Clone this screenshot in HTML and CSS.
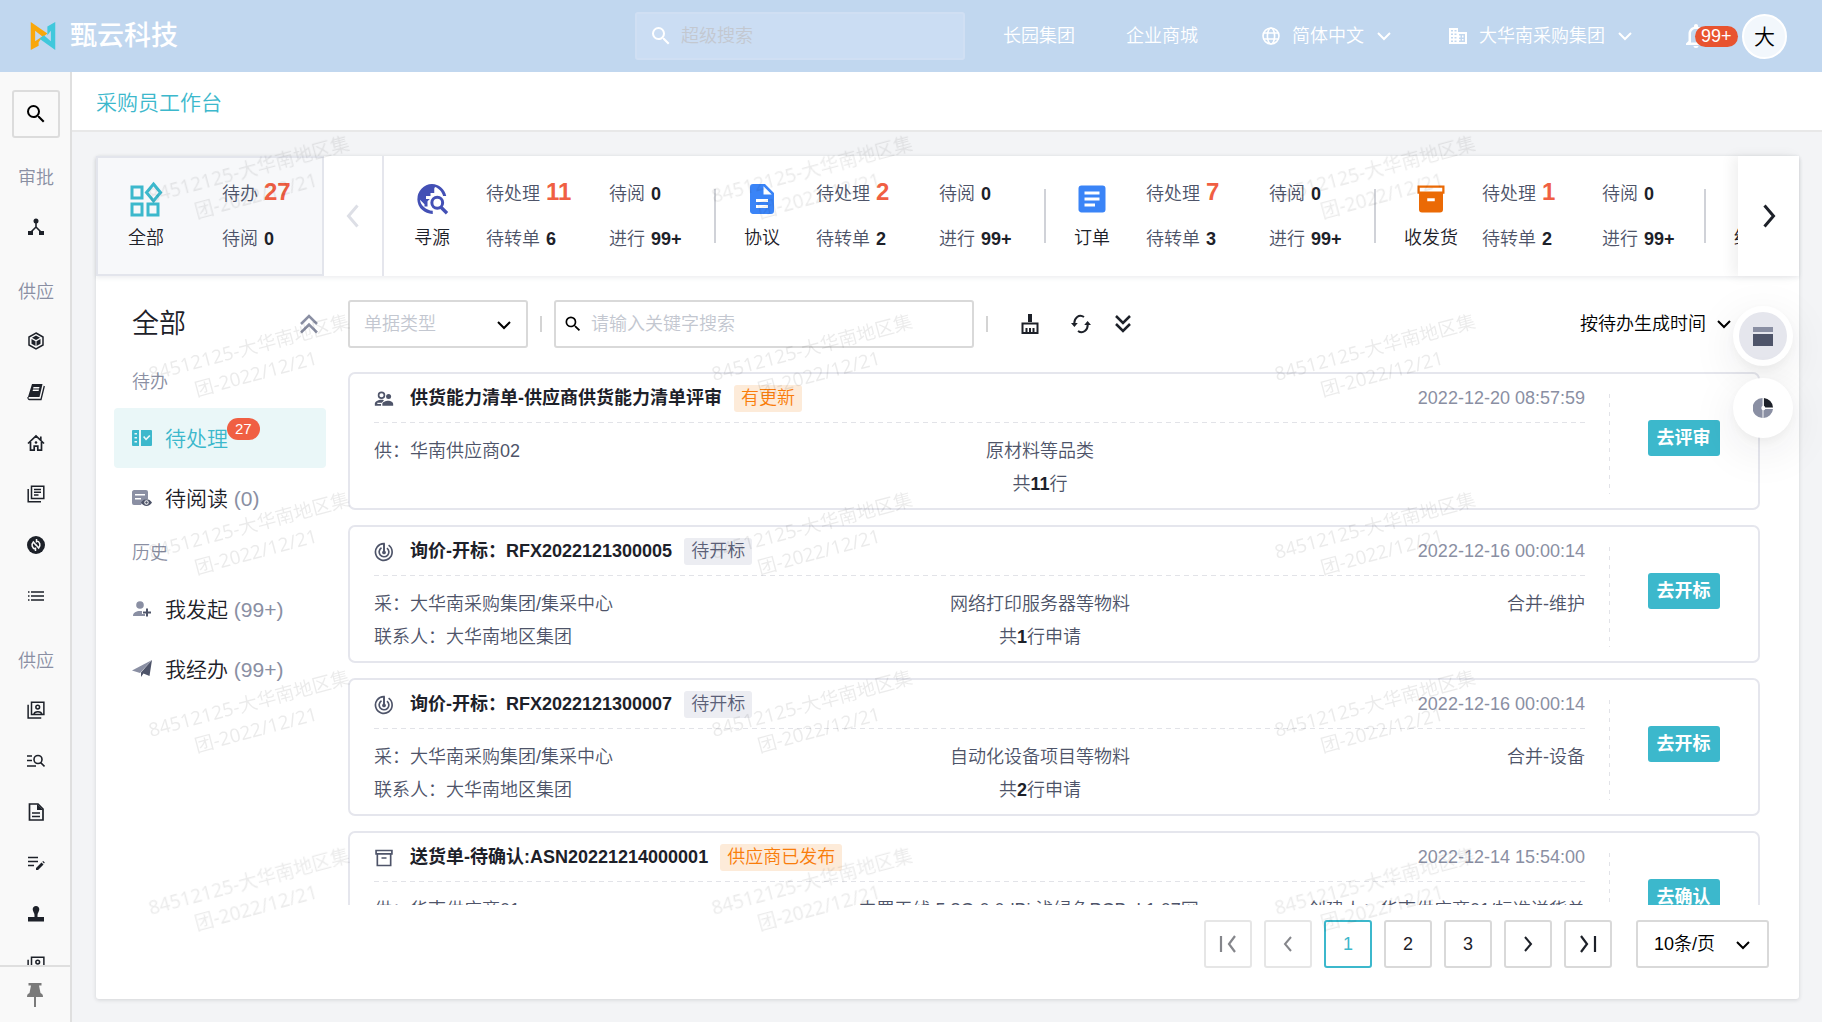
FILE: index.html
```html
<!DOCTYPE html>
<html lang="zh-CN">
<head>
<meta charset="utf-8">
<meta name="viewport" content="width=device-width, initial-scale=1">
<title>采购员工作台</title>
<link rel="stylesheet" href="styles.css">
</head>
<body>
<svg class="sprite" aria-hidden="true">
  <symbol id="i-search" viewBox="0 0 24 24"><path fill="currentColor" d="M15.5 14h-.79l-.28-.27A6.47 6.47 0 0 0 16 9.500 6.500 6.500 0 1 0 9.500 16c1.610 0 3.090-.59 4.230-1.570l.27.28v.79l5 4.990L20.490 19zm-6 0C7.010 14 5 11.990 5 9.500S7.010 5 9.500 5 14 7.010 14 9.500 11.990 14 9.500 14z"/></symbol>
  <symbol id="i-down" viewBox="0 0 16 16"><path fill="none" stroke="currentColor" stroke-width="2" d="M2 5l6 6 6-6"/></symbol>
  <symbol id="i-left" viewBox="0 0 16 16"><path fill="none" stroke="currentColor" stroke-width="2" d="M11 1L5 8l6 7"/></symbol>
  <symbol id="i-right" viewBox="0 0 16 16"><path fill="none" stroke="currentColor" stroke-width="2" d="M5 1l6 7-6 7"/></symbol>
  <symbol id="i-people" viewBox="0 0 24 24"><circle cx="9" cy="7.500" r="3.500" fill="none" stroke="currentColor" stroke-width="2"/><circle cx="17.500" cy="9" r="3" fill="currentColor"/><path fill="currentColor" d="M1 20v-2c0-3 4-5 8-5 1 0 2 .1 3 .4L9.500 16.500H4V18h4.500v2zM10 20v-2c0-2.500 4-4 7-4s6 1.500 6 4v2z"/></symbol>
  <symbol id="i-target" viewBox="0 0 24 24"><path fill="none" stroke="currentColor" stroke-width="2" d="M17.500 3.800A10 10 0 1 1 12 2v10M15.500 7.300A5.800 5.800 0 1 1 9 7"/><path fill="none" stroke="currentColor" stroke-width="2" d="M12 2v10"/><circle cx="12" cy="12.500" r="2.200" fill="currentColor"/></symbol>
  <symbol id="i-archive" viewBox="0 0 24 24"><path fill="none" stroke="currentColor" stroke-width="2" d="M2.500 3h19v4h-19zM4 7v14h16V7M9 12h6"/></symbol>
  <symbol id="i-contacts" viewBox="0 0 24 24"><path fill="none" stroke="currentColor" stroke-width="2" d="M6 1.500h16.500V18H6zM1.500 5v17.500H19M9 18c1-5 10-5 11 0"/><circle cx="14.300" cy="8" r="2.500" fill="none" stroke="currentColor" stroke-width="2"/></symbol>
</svg>

<div class="app">
  <header class="topbar">
    <a class="brand" href="#">
      <svg class="brand-mark" viewBox="0 0 30 32"><path fill="#f9a70a" d="M1 0l19 13-5 4-9-7v12l9-6-5 7v4L1 32z"/><path fill="#40c8dc" d="M29 0v32L11 19l5-4 8 7V10l-4 5V5z"/></svg>
      <span class="brand-name">甄云科技</span>
    </a>
    <label class="global-search">
      <svg class="ic-24"><use href="#i-search"/></svg>
      <input type="text" aria-label="超级搜索" placeholder="超级搜索">
    </label>
    <a class="top-link" href="#">长园集团</a>
    <a class="top-link top-link-mall" href="#">企业商城</a>
    <button class="top-menu top-lang">
      <svg class="ic-18" viewBox="0 0 18 18"><g fill="none" stroke="currentColor" stroke-width="1.600"><circle cx="9" cy="9" r="8"/><ellipse cx="9" cy="9" rx="3.600" ry="8"/><path d="M1.500 6h15M1.500 12h15"/></g></svg>
      <span>简体中文</span>
      <svg class="ic-chev"><use href="#i-down"/></svg>
    </button>
    <button class="top-menu top-org">
      <svg class="ic-18" viewBox="0 0 18 18"><path fill="currentColor" fill-rule="evenodd" d="M0 1h9v4h9v12H0zM2 3v1.500h2V3zm3.500 0v1.500h2V3zM2 6.500V8h2V6.500zm3.500 0V8h2V6.500zM2 10v1.500h2V10zm3.500 0v1.500h2V10zM2 13.500V15h2v-1.500zm3.500 0V15h2v-1.500zM10 7v1.500h1.500v2H10V12h1.500v1.500H10V15h6V7zm3 1.500h1.500v2H13zm0 3.500h1.500v1.500H13z"/></svg>
      <span>大华南采购集团</span>
      <svg class="ic-chev"><use href="#i-down"/></svg>
    </button>
    <button class="bell" aria-label="消息">
      <svg viewBox="0 0 20 24"><path fill="currentColor" fill-rule="evenodd" d="M10 0c1.200 0 2 .8 2 2v.7c3.500.9 5.500 3.800 5.500 7.300v7l2.500 2.500V21H0v-1.500L2.500 17v-7c0-3.500 2-6.400 5.500-7.300V2c0-1.200.8-2 2-2zM5 18.500h10V10c0-3-2-5-5-5s-5 2-5 5zM7.500 22h5c0 1.200-1 2-2.500 2s-2.500-.8-2.500-2z"/></svg>
      <span class="bell-badge">99+</span>
    </button>
    <button class="avatar">大</button>
  </header>

  <div class="body">
    <aside class="sidebar">
      <div class="side-scroll">
        <button class="side-search" aria-label="搜索"><svg class="ic-24"><use href="#i-search"/></svg></button>
        <h2 class="side-label">审批</h2>
        <a class="side-item" href="#" aria-label="审批流"><svg viewBox="0 0 18 18"><g fill="none" stroke="currentColor" stroke-width="1.600"><path d="M9 3v6l-6 6M9 9l6 6"/></g><circle cx="9" cy="3" r="2.500" fill="currentColor"/><path fill="currentColor" d="M1 13h5v4H1zM12 13h5v4h-5z"/></svg></a>
        <h2 class="side-label">供应</h2>
        <a class="side-item" href="#" aria-label="物料"><svg viewBox="0 0 18 18"><path fill="none" stroke="currentColor" stroke-width="1.500" d="M9 1l7 4v8l-7 4-7-4V5z"/><path fill="currentColor" d="M9 3.500l4 2.300L9 8 5 5.800zM4.500 7l4 2.300V14l-4-2.300zM13.500 7l-4 2.300V14l4-2.300z"/></svg></a>
        <a class="side-item" href="#" aria-label="目录"><svg viewBox="0 0 18 18"><path fill="currentColor" fill-rule="evenodd" d="M5 1h10.500L12.500 14H1zM6.500 4l-.4 1.500h6L12.500 4zM6 6.500L5.600 8h6l.4-1.500z"/><path fill="none" stroke="currentColor" stroke-width="1.300" d="M1 14c0 2 0 2.500 1.500 2.500H14L17.300 3"/></svg></a>
        <a class="side-item" href="#" aria-label="主页"><svg viewBox="0 0 18 18"><path fill="none" stroke="currentColor" stroke-width="1.700" d="M1 9.500L9 2l8 7.500M3.500 8v8.200h3.700v-4h3.600v4h3.700V8M13.800 6V2.500"/><circle cx="9" cy="8.500" r="1.300" fill="currentColor"/></svg></a>
        <a class="side-item" href="#" aria-label="文档"><svg viewBox="0 0 18 18"><path fill="none" stroke="currentColor" stroke-width="1.500" d="M4.500 1.200h12.300v12.300H4.500zM1.200 4v12.800H14M7 4.500h7M7 7.300h7M7 10h4.500"/></svg></a>
        <a class="side-item" href="#" aria-label="结算"><svg viewBox="0 0 18 18"><circle cx="9" cy="9" r="9" fill="currentColor"/><path fill="none" stroke="#f9f9f9" stroke-width="1.500" d="M8.500 13.200C5 12.500 4 8.500 6.300 6l3 3.500M9.500 4.800C13 5.500 14 9.500 11.700 12l-3-3.500M9.500 3v3.500M8.500 11.500V15"/></svg></a>
        <a class="side-item" href="#" aria-label="列表"><svg viewBox="0 0 18 18"><path fill="none" stroke="currentColor" stroke-width="1.600" d="M1 5h1.500M4 5h13M1 9h1.500M4 9h13M1 13h1.500M4 13h13"/></svg></a>
        <h2 class="side-label">供应</h2>
        <a class="side-item" href="#" aria-label="联系人"><svg><use href="#i-contacts"/></svg></a>
        <a class="side-item" href="#" aria-label="查询"><svg viewBox="0 0 18 18"><path fill="none" stroke="currentColor" stroke-width="1.600" d="M0 4h5M0 8.500h5M0 14h9M13.500 10.500l4 4"/><circle cx="11" cy="7.500" r="4" fill="none" stroke="currentColor" stroke-width="1.600"/></svg></a>
        <a class="side-item" href="#" aria-label="单据"><svg viewBox="0 0 18 18"><path fill="none" stroke="currentColor" stroke-width="1.700" d="M2.500 1h8.500l5 5v11H2.500zM5 10h8M5 13.500h8"/><path fill="currentColor" d="M10 1v6h6z"/></svg></a>
        <a class="side-item" href="#" aria-label="编辑"><svg viewBox="0 0 18 18"><path fill="none" stroke="currentColor" stroke-width="1.500" d="M1 3.500h10M1 7.500h10M1 11.500h6"/><path fill="currentColor" d="M9 14l5.500-5.500 2 2L11 16H9zM15.300 7.800l.9-.8 1.600 1.600-.8.900z"/></svg></a>
        <a class="side-item" href="#" aria-label="盖章"><svg viewBox="0 0 18 18"><path fill="currentColor" d="M9 1c2 0 3.300 1.400 3.300 3.300C12.300 6.500 10.500 8 10.500 10v2H17v4.500H1V12h6.500v-2c0-2-1.800-3.500-1.800-5.700C5.700 2.400 7 1 9 1z"/></svg></a>
        <a class="side-item" href="#" aria-label="供应商"><svg><use href="#i-contacts"/></svg></a>
      </div>
      <button class="side-pin" aria-label="固定"><svg viewBox="0 0 18 24"><path fill="currentColor" d="M2.500 0h13v2.500H13L14.500 10c2 .8 2.500 2 2.500 4h-7v10H8V14H1c0-2 .5-3.200 2.500-4L5 2.500H2.500z"/></svg></button>
    </aside>

    <main class="main">
      <h1 class="page-title">采购员工作台</h1>
      <div class="panel">
        <section class="stats">
          <button class="stat-all">
            <span class="stat-kind"><svg class="ic-36" viewBox="0 0 36 36"><g fill="none" stroke="#3cb8cc" stroke-width="3"><path d="M4 6h10v11H4zM4 23h10v11H4zM20 23h10v11H20zM25.500 3l7 8.500-7 8.500-7-8.500z"/></g></svg><span>全部</span></span>
            <span class="stat-col"><span class="stat">待办 <b class="hot">27</b></span><span class="stat">待阅 <b>0</b></span></span>
          </button>
          <button class="stat-prev" aria-label="上一组"><svg class="ic-24"><use href="#i-left"/></svg></button>
          <div class="stat-track">
            <div class="stat-item">
              <span class="stat-kind"><svg class="ic-36" viewBox="0 0 24 24"><path fill="#4350b5" d="M12 2a10 10 0 1 0 .5 20v-2.100C7.900 19.500 4.300 16.100 4 12.500l3 3V17h2v-3.500l1.500-1.500H8v-2h3V8h2.500V5l.5-1c2.700.9 4.800 3.500 5.400 6h2.100C20.500 5.500 16.700 2 12 2z"/><circle cx="15.500" cy="14.500" r="3.600" fill="none" stroke="#4350b5" stroke-width="2"/><path stroke="#4350b5" stroke-width="2.200" d="M18 17.500l4 4"/></svg><span>寻源</span></span>
              <span class="stat-col"><span class="stat">待处理 <b class="hot">11</b></span><span class="stat">待转单 <b>6</b></span></span>
              <span class="stat-col"><span class="stat">待阅 <b>0</b></span><span class="stat">进行 <b>99+</b></span></span>
            </div>
            <div class="stat-item">
              <span class="stat-kind"><svg class="ic-36" viewBox="0 0 24 24"><path fill="#3a84f7" fill-rule="evenodd" d="M14 2H6a2 2 0 0 0-2 2v16c0 1.100.9 2 2 2h12a2 2 0 0 0 2-2V8zm2 16H8v-2h8zm0-4H8v-2h8zm-3-5V3.500L18.500 9z"/></svg><span>协议</span></span>
              <span class="stat-col"><span class="stat">待处理 <b class="hot">2</b></span><span class="stat">待转单 <b>2</b></span></span>
              <span class="stat-col"><span class="stat">待阅 <b>0</b></span><span class="stat">进行 <b>99+</b></span></span>
            </div>
            <div class="stat-item">
              <span class="stat-kind"><svg class="ic-36" viewBox="0 0 24 24"><path fill="#3a84f7" fill-rule="evenodd" d="M19 3H5a2 2 0 0 0-2 2v14c0 1.100.9 2 2 2h14a2 2 0 0 0 2-2V5a2 2 0 0 0-2-2zm-5 14H7v-2h7zm3-4H7v-2h10zm0-4H7V7h10z"/></svg><span>订单</span></span>
              <span class="stat-col"><span class="stat">待处理 <b class="hot">7</b></span><span class="stat">待转单 <b>3</b></span></span>
              <span class="stat-col"><span class="stat">待阅 <b>0</b></span><span class="stat">进行 <b>99+</b></span></span>
            </div>
            <div class="stat-item stat-item-wide">
              <span class="stat-kind"><svg class="ic-36" viewBox="0 0 24 24"><path fill="#eb6a05" fill-rule="evenodd" d="M3 3h18v5.500h-1V19a2 2 0 0 1-2 2H6a2 2 0 0 1-2-2V8.500H3zm1.500 1.500V7h15V4.500zM9.500 11.500v2h5v-2z"/></svg><span>收发货</span></span>
              <span class="stat-col"><span class="stat">待处理 <b class="hot">1</b></span><span class="stat">待转单 <b>2</b></span></span>
              <span class="stat-col"><span class="stat">待阅 <b>0</b></span><span class="stat">进行 <b>99+</b></span></span>
            </div>
            <div class="stat-item">
              <span class="stat-kind"><span class="ic-36"></span><span>结算</span></span>
            </div>
          </div>
          <button class="stat-next" aria-label="下一组"><svg class="ic-24"><use href="#i-right"/></svg></button>
        </section>

        <div class="work">
          <nav class="folders">
            <div class="folders-head">
              <h2>全部</h2>
              <button aria-label="收起"><svg class="ic-20" viewBox="0 0 20 20"><path fill="none" stroke="currentColor" stroke-width="2.500" d="M2 10l8-8 8 8M2 18.500l8-8 8 8"/></svg></button>
            </div>
            <h3 class="folders-label">待办</h3>
            <a class="folder folder-active" href="#">
              <svg class="ic-20" viewBox="0 0 20 20"><path fill="currentColor" fill-rule="evenodd" d="M1 2h6v16H1a1 1 0 0 1-1-1V3a1 1 0 0 1 1-1zm1.500 3v1.500H5V5zm0 4v1.500H5V9zm0 4v1.500H5V13zM9 2h10a1 1 0 0 1 1 1v14a1 1 0 0 1-1 1H9zm2 7l3 3.500L18.500 8l-1.300-1L14 10.200 12.300 8z"/></svg>
              <span>待处理</span><em class="folder-badge">27</em>
            </a>
            <a class="folder" href="#">
              <svg class="ic-20" viewBox="0 0 20 20"><path fill="#8a8fa3" fill-rule="evenodd" d="M2 2h12a2 2 0 0 1 2 2v7c-3 0-5.500 2-7 6H2a2 2 0 0 1-2-2V4c0-1 1-2 2-2zm1 4v1.500h10V6zm0 4v1.500h6V10z"/><path fill="#4e5469" fill-rule="evenodd" d="M9 14.500c2.500-4.500 8.500-4.500 11 0-2.500 4.500-8.500 4.500-11 0zm5.500-2.200a2.200 2.200 0 1 0 0 4.400 2.200 2.200 0 0 0 0-4.400z"/><circle cx="14.500" cy="14.500" r="1.200" fill="#4e5469"/></svg>
              <span>待阅读 <i>(0)</i></span>
            </a>
            <h3 class="folders-label">历史</h3>
            <a class="folder" href="#">
              <svg class="ic-20" viewBox="0 0 20 20"><circle cx="8" cy="6" r="3.800" fill="#8a8fa3"/><path fill="#8a8fa3" d="M1 17c0-4 4-5.500 9-5v3h3v2z"/><path stroke="#4e5469" stroke-width="2" d="M15 9.500v8M11 13.500h8"/></svg>
              <span>我发起 <i>(99+)</i></span>
            </a>
            <a class="folder" href="#">
              <svg class="ic-20" viewBox="0 0 20 20"><path fill="#8a8fa3" d="M0 11.500L20 1 8 14z"/><path fill="#4e5469" d="M20 1l-2.500 16-6-2.500L9 18v-4.500z"/></svg>
              <span>我经办 <i>(99+)</i></span>
            </a>
          </nav>

          <section class="inbox">
            <div class="toolbar">
              <span class="pick pick-type">
                <select aria-label="单据类型"><option>单据类型</option></select>
                <svg class="ic-chev"><use href="#i-down"/></svg>
              </span>
              <span class="rule"></span>
              <label class="keyword">
                <svg class="ic-20"><use href="#i-search"/></svg>
                <input type="text" aria-label="关键字" placeholder="请输入关键字搜索">
              </label>
              <span class="rule"></span>
              <button class="tool tool-first" aria-label="清空"><svg class="ic-20" viewBox="0 0 20 20"><path fill="currentColor" d="M8 0h4v8H8z"/><path fill="none" stroke="currentColor" stroke-width="2" d="M2.500 19V9.500h15V19zM6.500 19v-5M10 19v-5M13.500 19v-5"/></svg></button>
              <button class="tool" aria-label="刷新"><svg class="ic-20" viewBox="0 0 20 20"><path fill="none" stroke="currentColor" stroke-width="2" d="M13 3C8-.5 3 4 3.300 10M7 17c5 3.500 10-1 9.700-7"/><path fill="currentColor" d="M0 9h6.800l-3.400 4zM13.200 11H20l-3.400-4z"/></svg></button>
              <button class="tool" aria-label="展开"><svg class="ic-20" viewBox="0 0 20 20"><path fill="none" stroke="currentColor" stroke-width="2.500" d="M3 2l7 7 7-7M3 10l7 7 7-7"/></svg></button>
              <button class="sort"><span>按待办生成时间</span><svg class="ic-chev"><use href="#i-down"/></svg></button>
            </div>

            <div class="list">
              <article class="card">
                <div class="card-main">
                  <header class="card-head"><svg class="ic-20"><use href="#i-people"/></svg><h3>供货能力清单-供应商供货能力清单评审</h3><span class="tag tag-warn">有更新</span><time>2022-12-20 08:57:59</time></header>
                  <div class="card-body">
                    <div><p>供：华南供应商02</p></div>
                    <div class="mid"><p>原材料等品类</p><p>共<b>11</b>行</p></div>
                    <div class="end"></div>
                  </div>
                </div>
                <div class="card-action"><button class="go">去评审</button></div>
              </article>
              <article class="card">
                <div class="card-main">
                  <header class="card-head"><svg class="ic-20"><use href="#i-target"/></svg><h3>询价-开标：RFX2022121300005</h3><span class="tag">待开标</span><time>2022-12-16 00:00:14</time></header>
                  <div class="card-body">
                    <div><p>采：大华南采购集团/集采中心</p><p>联系人：大华南地区集团</p></div>
                    <div class="mid"><p>网络打印服务器等物料</p><p>共<b>1</b>行申请</p></div>
                    <div class="end"><p>合并-维护</p></div>
                  </div>
                </div>
                <div class="card-action"><button class="go">去开标</button></div>
              </article>
              <article class="card">
                <div class="card-main">
                  <header class="card-head"><svg class="ic-20"><use href="#i-target"/></svg><h3>询价-开标：RFX2022121300007</h3><span class="tag">待开标</span><time>2022-12-16 00:00:14</time></header>
                  <div class="card-body">
                    <div><p>采：大华南采购集团/集采中心</p><p>联系人：大华南地区集团</p></div>
                    <div class="mid"><p>自动化设备项目等物料</p><p>共<b>2</b>行申请</p></div>
                    <div class="end"><p>合并-设备</p></div>
                  </div>
                </div>
                <div class="card-action"><button class="go">去开标</button></div>
              </article>
              <article class="card">
                <div class="card-main">
                  <header class="card-head"><svg class="ic-20"><use href="#i-archive"/></svg><h3>送货单-待确认:ASN20221214000001</h3><span class="tag tag-warn">供应商已发布</span><time>2022-12-14 15:54:00</time></header>
                  <div class="card-body">
                    <div><p>供：华南供应商01</p></div>
                    <div class="mid mid-long"><p>内置天线 5.8G 0.0dBi 浅绿色PCB Φ1.07网</p></div>
                    <div class="end"><p>创建人：华南供应商01/标准送货单</p></div>
                  </div>
                </div>
                <div class="card-action"><button class="go">去确认</button></div>
              </article>
            </div>
          </section>
        </div>

        <nav class="pager" aria-label="分页">
          <button class="page" disabled aria-label="首页"><svg class="ic-20" viewBox="0 0 20 20"><path fill="none" stroke="currentColor" stroke-width="2.200" d="M3 2v16M17 2l-6 8 6 8"/></svg></button>
          <button class="page" disabled aria-label="上一页"><svg class="ic-16"><use href="#i-left"/></svg></button>
          <button class="page page-current">1</button>
          <button class="page">2</button>
          <button class="page">3</button>
          <button class="page" aria-label="下一页"><svg class="ic-16"><use href="#i-right"/></svg></button>
          <button class="page" aria-label="末页"><svg class="ic-20" viewBox="0 0 20 20"><path fill="none" stroke="currentColor" stroke-width="2.200" d="M17 2v16M3 2l6 8-6 8"/></svg></button>
          <span class="pick pick-size">
            <select aria-label="每页条数"><option>10条/页</option></select>
            <svg class="ic-chev"><use href="#i-down"/></svg>
          </span>
        </nav>
      </div>
    </main>
  </div>
</div>

<div class="floaters">
  <button class="float float-on" aria-label="卡片视图"><span><svg class="ic-20" viewBox="0 0 20 20"><path fill="#8a8fa3" d="M0 1h20v5H0z"/><path fill="#4e5469" d="M0 8h20v12H0z"/></svg></span></button>
  <button class="float" aria-label="图表视图"><span><svg class="ic-20" viewBox="0 0 22 22"><path fill="#8a8fa3" d="M10.500 0v8.500a3 3 0 0 0 0 5V22a11 11 0 0 1 0-22zM11.500 22v-8.500a3 3 0 0 0 2-1.500H22a11 11 0 0 1-10.500 10z"/><path fill="#1d2129" d="M12 0a11 11 0 0 1 10 10.500h-8.500A3 3 0 0 0 12 8.500z"/></svg></span></button>
</div>

<div class="watermark" aria-hidden="true">
  <p>84512125-大华南地区集<br>团-2022/12/21</p><p>84512125-大华南地区集<br>团-2022/12/21</p><p>84512125-大华南地区集<br>团-2022/12/21</p>
  <p>84512125-大华南地区集<br>团-2022/12/21</p><p>84512125-大华南地区集<br>团-2022/12/21</p><p>84512125-大华南地区集<br>团-2022/12/21</p>
  <p>84512125-大华南地区集<br>团-2022/12/21</p><p>84512125-大华南地区集<br>团-2022/12/21</p><p>84512125-大华南地区集<br>团-2022/12/21</p>
  <p>84512125-大华南地区集<br>团-2022/12/21</p><p>84512125-大华南地区集<br>团-2022/12/21</p><p>84512125-大华南地区集<br>团-2022/12/21</p>
  <p>84512125-大华南地区集<br>团-2022/12/21</p><p>84512125-大华南地区集<br>团-2022/12/21</p><p>84512125-大华南地区集<br>团-2022/12/21</p>
</div>
</body>
</html>
```
FILE: styles.css
```css
:root {
  --teal: #3cb8cc;
  --red: #f05f43;
  --ink: #1d2129;
  --slate: #4e5469;
  --muted: #8a8fa3;
  --line: #e5e6ed;
  --field: #d9d9d9;
  --dash: #e2e3e8;
}

* { box-sizing: border-box; }

body {
  margin: 0;
  font: 350 18px/27px "Liberation Sans", "Noto Sans CJK SC", sans-serif;
  color: var(--ink);
}

h1, h2, h3, p { margin: 0; font-weight: inherit; }
b { font-weight: 700; }
a { color: inherit; text-decoration: none; }
i, em { font-style: normal; }
svg { display: block; flex: none; }

button, input, select {
  font: inherit;
  color: inherit;
  margin: 0;
  padding: 0;
  border: 0;
  background: none;
  outline: 0;
  appearance: none;
}

button { cursor: pointer; }

.sprite { position: absolute; width: 0; height: 0; }
.ic-16 { width: 16px; height: 16px; }
.ic-18 { width: 18px; height: 18px; }
.ic-20 { width: 20px; height: 20px; }
.ic-24 { width: 24px; height: 24px; }
.ic-36 { width: 36px; height: 36px; }
.ic-chev { width: 16px; height: 16px; }

.app { display: flex; flex-direction: column; height: 100vh; }
.body { display: flex; flex: 1; min-height: 0; }

/* Top bar */
.topbar {
  display: flex;
  align-items: center;
  height: 72px;
  padding: 0 35px 0 28px;
  background: #c1d7ef;
  color: #fff;
}
.brand { display: flex; align-items: center; gap: 12px; }
.brand-mark { width: 30px; height: 28px; }
.brand-name { font-size: 27px; line-height: 36px; font-weight: 500; }
.global-search {
  display: flex;
  align-items: center;
  gap: 8px;
  width: 330px;
  height: 48px;
  margin-left: auto;
  padding: 0 12px;
  border: 2px solid #d0dff3;
  border-radius: 3px;
  background: #cbddf3;
}
.global-search input { flex: 1; min-width: 0; }
.global-search input::placeholder { color: #c3c8d0; opacity: 1; }
.top-link { margin-left: 38px; }
.top-link-mall { margin-left: 51px; }
.top-menu { display: flex; align-items: center; gap: 12px; }
.top-lang { margin-left: 64px; }
.top-org { margin-left: 57px; }
.bell { position: relative; width: 52px; height: 24px; margin-left: 53px; }
.bell svg { width: 20px; height: 24px; }
.bell-badge {
  position: absolute;
  left: 9px;
  top: 2px;
  padding: 0 6px;
  border-radius: 11px;
  background: #e8532f;
  line-height: 21px;
}
.avatar {
  width: 45px;
  height: 45px;
  margin-left: 4px;
  border: 2px solid #fff;
  border-radius: 50%;
  background: #f2f7fc;
  color: #000;
  font-size: 21px;
}

/* Side rail */
.sidebar {
  display: flex;
  flex-direction: column;
  flex: none;
  width: 72px;
  border-right: 2px solid #dfdfdf;
  background: #f9f9f9;
}
.side-scroll {
  flex: 1;
  min-height: 0;
  overflow: hidden;
  display: flex;
  flex-direction: column;
  align-items: center;
  padding: 18px 0 0 2px;
}
.side-search {
  display: grid;
  place-items: center;
  flex: none;
  width: 48px;
  height: 48px;
  border: 2px solid #dcdcdc;
  border-radius: 3px;
  color: #000;
}
.side-label {
  flex: none;
  height: 63px;
  padding-top: 27px;
  font-size: 18px;
  line-height: 27px;
  color: var(--muted);
}
.side-item { display: grid; place-items: center; flex: none; width: 48px; height: 51px; }
.side-item svg { width: 18px; height: 18px; }
.side-pin {
  display: grid;
  place-items: center;
  height: 57px;
  border-top: 2px solid #dfdfdf;
  color: #7a7a7a;
}
.side-pin svg { width: 18px; height: 24px; }

/* Main column */
.main {
  display: flex;
  flex-direction: column;
  flex: 1;
  min-width: 0;
  background: #f3f4f6;
}
.page-title {
  flex: none;
  height: 60px;
  padding: 0 24px;
  border-bottom: 2px solid #e8e8e8;
  background: #fff;
  color: var(--teal);
  font-size: 21px;
  line-height: 62px;
}
.panel {
  display: flex;
  flex-direction: column;
  flex: 1;
  min-height: 0;
  margin: 24px 23px 23px 24px;
  border-radius: 3px;
  background: #fff;
  box-shadow: 0 1px 4px rgba(29, 33, 41, .15);
}

/* Statistics strip */
.stats {
  display: flex;
  flex: none;
  height: 120px;
  box-shadow: 0 2px 4px rgba(78, 84, 105, .1);
}
.stats b { margin-left: 1px; color: var(--ink); }
.stats .hot { color: var(--red); font-size: 24px; line-height: 20px; }
.stat-all {
  display: flex;
  gap: 58px;
  width: 228px;
  padding: 23px 0 0 30px;
  border: 2px solid #e3e5ec;
  background: #f7f8fa;
}
.stat-kind {
  display: flex;
  flex-direction: column;
  align-items: center;
  gap: 8px;
  color: var(--ink);
}
.stat-col { display: flex; flex-direction: column; gap: 18px; }
.stat { height: 27px; color: var(--slate); text-align: left; white-space: nowrap; }
.stat-prev {
  display: grid;
  place-items: center;
  width: 60px;
  border-right: 2px solid var(--line);
  color: #dddfe6;
}
.stat-track { display: flex; flex: 1; min-width: 0; overflow: hidden; }
.stat-item {
  display: grid;
  grid-template-columns: 36px 87px 1fr;
  column-gap: 36px;
  flex: none;
  width: 330px;
  padding: 25px 0 0 28px;
  background: linear-gradient(#d0d2d8, #d0d2d8) right 33px / 2px 54px no-repeat;
}
.stat-item:first-child { width: 332px; padding-left: 30px; }
.stat-item-wide { grid-template-columns: 54px 96px 1fr; column-gap: 24px; }
.stat-next {
  z-index: 1;
  display: grid;
  place-items: center;
  width: 61px;
  background: #fff;
  box-shadow: -6px 0 12px rgba(0, 0, 0, .06);
}

/* Folder list */
.work { display: flex; flex: 1; min-height: 0; }
.folders { flex: none; width: 252px; padding: 24px 22px 0 18px; }
.folders-head {
  display: flex;
  align-items: center;
  justify-content: space-between;
  height: 48px;
  padding: 0 7px 0 18px;
}
.folders-head h2 { font-size: 27px; line-height: 36px; }
.folders-head button { color: var(--muted); }
.folders-label { height: 60px; padding: 21px 18px 0; font-size: 18px; line-height: 27px; color: var(--muted); }
.folder + .folders-label { height: 51px; padding-top: 12px; }
.folder {
  display: flex;
  align-items: center;
  gap: 13px;
  height: 60px;
  padding: 0 18px;
  border-radius: 4px;
  font-size: 21px;
}
.folder i { color: var(--muted); }
.folder-active { background: #eaf7f8; color: var(--teal); }
.folder-badge {
  align-self: flex-start;
  margin: 10px 0 0 -14px;
  padding: 0 8px;
  border-radius: 11px;
  background: var(--red);
  color: #fff;
  font-size: 15px;
  line-height: 22px;
}

/* Inbox */
.inbox {
  display: flex;
  flex-direction: column;
  flex: 1;
  min-width: 0;
  padding: 24px 39px 0 0;
}
.toolbar { display: flex; align-items: center; flex: none; height: 48px; margin-bottom: 24px; }
.pick { position: relative; display: block; height: 48px; }
.pick select { width: 100%; height: 48px; border: 2px solid var(--field); border-radius: 3px; padding: 0 14px; }
.pick svg { position: absolute; right: 16px; top: 17px; pointer-events: none; color: #000; }
.pick-type { width: 180px; }
.pick-type select { color: #c3c7d0; }
.pick-size { width: 133px; margin-left: 12px; color: #000; }
.pick-size select { padding: 0 16px; }
.pick-size svg { right: 18px; }
.rule { width: 2px; height: 16px; margin: 0 12px; background: #d4d4d4; }
.keyword {
  display: flex;
  align-items: center;
  gap: 8px;
  flex: 0 1 420px;
  height: 48px;
  padding: 0 7px;
  border: 2px solid var(--field);
  border-radius: 3px;
  color: #000;
}
.keyword input { flex: 1; min-width: 0; }
.keyword input::placeholder { color: #c3c7d0; opacity: 1; }
.tool { margin-right: 22px; color: var(--ink); }
.tool-first { margin-left: 20px; margin-right: 31px; }
.sort { display: flex; align-items: center; gap: 10px; margin-left: auto; margin-right: 28px; color: #000; }

.list {
  display: flex;
  flex-direction: column;
  gap: 15px;
  flex: 1;
  min-height: 0;
  overflow: hidden;
}
.card {
  display: flex;
  flex: none;
  height: 138px;
  border: 2px solid var(--line);
  border-radius: 7px;
}
.card-main { flex: 1; min-width: 0; padding: 0 24px; }
.card-head {
  display: flex;
  align-items: center;
  height: 49px;
  background: repeating-linear-gradient(90deg, var(--dash) 0 5px, transparent 5px 9px) bottom / 100% 1px no-repeat;
}
.card-head svg { color: var(--slate); }
.card-head h3 { margin-left: 16px; font-size: 18px; line-height: 27px; font-weight: 700; white-space: nowrap; }
.card-head time { margin-left: auto; color: var(--muted); }
.tag { margin-left: 12px; padding: 0 7px; border-radius: 3px; background: #ecedf2; color: #5b6078; line-height: 27px; white-space: nowrap; }
.tag-warn { background: #fdebd9; color: #f97d0b; }
.card-body { display: grid; grid-template-columns: 40% 30% 30%; padding-top: 12px; line-height: 33px; color: var(--slate); white-space: nowrap; }
.card-body b { color: var(--ink); }
.mid { text-align: center; }
.mid-long { text-align: left; }
.end { text-align: right; }
.card-action {
  display: grid;
  place-items: center;
  width: 149px;
  margin: 20px 0 14px;
  padding-bottom: 12px;
  background: repeating-linear-gradient(180deg, var(--dash) 0 4px, transparent 4px 9px) left / 1px 100% no-repeat;
}
.go {
  width: 72px;
  height: 36px;
  border-radius: 3px;
  background: var(--teal);
  color: #fff;
  font-weight: 700;
}

/* Pagination */
.pager {
  display: flex;
  justify-content: flex-end;
  gap: 12px;
  flex: none;
  padding: 15px 30px 31px;
}
.page {
  display: grid;
  place-items: center;
  width: 48px;
  height: 48px;
  border: 2px solid var(--field);
  border-radius: 3px;
}
.page:disabled { border-color: #e6e6e6; color: #85868b; }
.page-current { border-color: var(--teal); color: var(--teal); }

/* Floating view switch */
.floaters {
  position: fixed;
  right: 29px;
  top: 306px;
  display: flex;
  flex-direction: column;
  gap: 12px;
}
.float {
  display: grid;
  place-items: center;
  width: 60px;
  height: 60px;
  border-radius: 50%;
  background: #fff;
  box-shadow: 0 12px 48px rgba(29, 33, 41, .09), 0 4px 12px rgba(29, 33, 41, .05);
}
.float span { display: grid; place-items: center; width: 48px; height: 48px; border-radius: 50%; }
.float-on span { background: #e5e6ed; }

/* Repeated watermark over the page */
.watermark {
  position: fixed;
  left: 131px;
  top: 156px;
  display: grid;
  grid-template-columns: repeat(3, 243px);
  grid-auto-rows: 54px;
  gap: 124px 320px;
  pointer-events: none;
}
.watermark p {
  font: 400 19px/27px "Noto Sans", "Noto Sans CJK SC", sans-serif;
  color: rgba(0, 0, 0, .08);
  text-align: center;
  transform: rotate(-15deg);
}
```
